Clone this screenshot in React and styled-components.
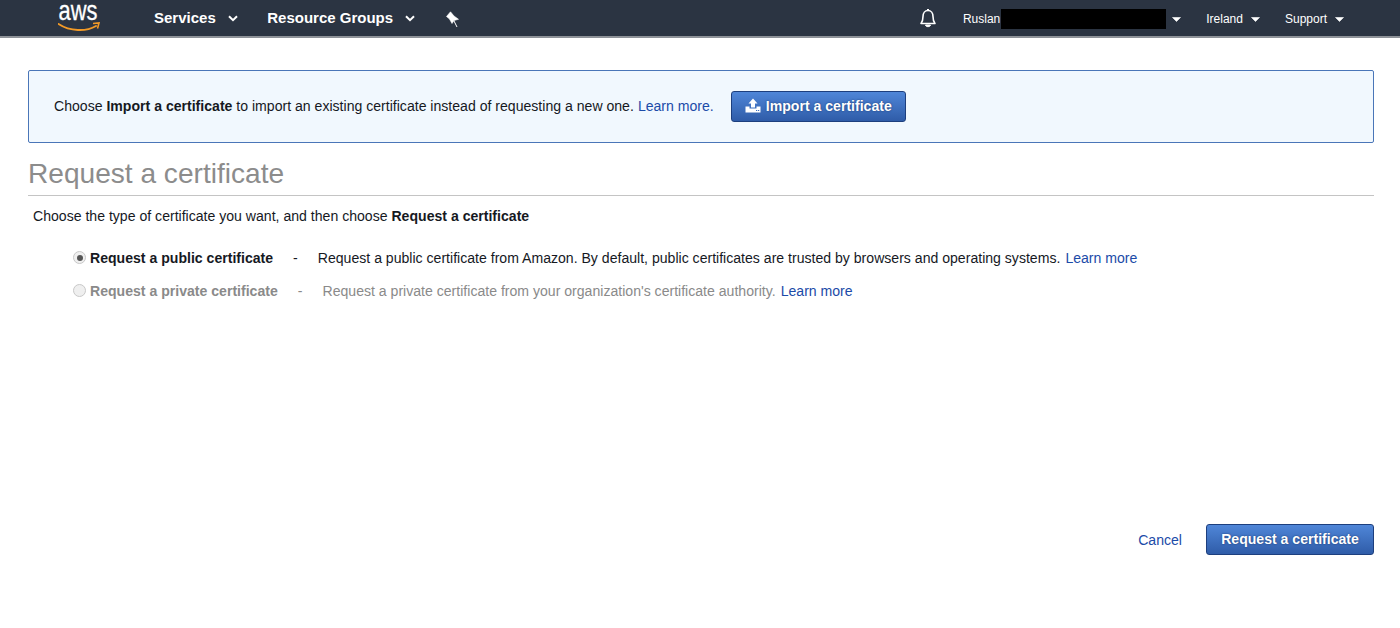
import React from 'react'
import styled, { createGlobalStyle } from 'styled-components'

const GlobalStyle = createGlobalStyle`
  html, body {
    margin: 0;
    padding: 0;
    background: #fff;
    font-family: "Liberation Sans", Arial, sans-serif;
    color: #16191f;
  }
`

const Page = styled.div`
  display: flex;
  flex-direction: column;
  height: 628px;
  overflow: hidden;
`

const NavBar = styled.header`
  display: flex;
  align-items: center;
  height: 36px;
  flex: none;
  padding: 0 56px 0 58px;
  background: #2b3442;
  border-bottom: 2px solid #8e9298;
  color: #fff;
`

const Logo = styled.div`
  position: relative;
  width: 40px;
  height: 32px;
  margin-right: 56px;
  flex: none;
`

const LogoText = styled.span`
  display: block;
  width: 50px;
  margin: 1px 0 0 -5px;
  font-size: 28px;
  line-height: 16px;
  text-align: center;
  transform: scaleX(0.78);
  -webkit-text-stroke: 0.3px #fff;
`

const Smile = styled.svg`
  position: absolute;
  left: 0;
  top: 19px;
`

const NavItem = styled.div`
  display: flex;
  align-items: center;
  font-size: ${p => (p.$small ? '12px' : '15px')};
  font-weight: ${p => (p.$small ? 400 : 700)};
  margin-left: ${p => p.$left || 0}px;
  margin-top: ${p => (p.$small ? '2px' : '0')};
  margin-bottom: ${p => (p.$small ? '0' : '2px')};
  white-space: nowrap;
`

const Chevron = styled.svg`
  margin-left: 12px;
  margin-top: 3px;
`

const SmallCaret = styled.svg`
  margin-left: ${p => p.$gap}px;
  margin-top: 1px;
`

const PinIcon = styled.svg`
  margin-left: 30px;
  margin-top: 3px;
  flex: none;
`

const Bell = styled.svg`
  margin-left: auto;
  flex: none;
`

const Redacted = styled.span`
  display: inline-block;
  width: 165px;
  height: 20px;
  background: #000;
  margin-left: 1px;
`

const Main = styled.main`
  display: flex;
  flex-direction: column;
  flex: 1;
  padding: 32px 26px 73px 28px;
`

const Banner = styled.section`
  display: flex;
  align-items: center;
  height: 69px;
  padding: 0 0 2px 25px;
  background: #f1f8fe;
  border: 1px solid #4a76b8;
  border-radius: 2px;
  font-size: 14.09px;
`

const Link = styled.a`
  color: #1c4ba8;
  text-decoration: none;
  margin-left: ${p => p.$left || 0}px;
`

const PrimaryButton = styled.button`
  display: flex;
  align-items: center;
  justify-content: center;
  height: 31px;
  width: ${p => p.$width}px;
  padding: 0 0 2px;
  border: 1px solid #1d3f7e;
  border-radius: 3px;
  background: linear-gradient(#4f86d8, #2f5ca8);
  color: #fff;
  font-family: inherit;
  font-size: 14.09px;
  font-weight: 700;
  text-shadow: 0 0 2px #17386f;
  margin-left: ${p => p.$left || 0}px;
  margin-top: ${p => p.$top || 0}px;
`

const UploadIcon = styled.svg`
  margin-right: 5px;
`

const Title = styled.h1`
  margin: 15px 0 0;
  height: 37px;
  font-size: 28.1px;
  line-height: 32px;
  font-weight: 400;
  color: #8c8c8c;
  border-bottom: 1px solid #c4c4c4;
`

const Intro = styled.p`
  margin: 12px 0 0 5px;
  font-size: 14.09px;
  line-height: 17px;
`

const Options = styled.div`
  display: flex;
  flex-direction: column;
  gap: 16px;
  margin: 24px 0 0 45px;
`

const OptionRow = styled.div`
  display: flex;
  align-items: center;
  height: 17px;
  font-size: 14.09px;
  color: ${p => (p.$disabled ? '#8a8a8a' : '#16191f')};
`

const Radio = styled.span`
  display: flex;
  align-items: center;
  justify-content: center;
  width: 11px;
  height: 11px;
  margin-right: 4px;
  border-radius: 50%;
  border: 1px solid #c8c8c8;
  background: ${p => (p.$disabled ? '#efefef' : '#f0f0f0')};
  &::after {
    content: '';
    display: ${p => (p.$checked ? 'block' : 'none')};
    width: 6px;
    height: 6px;
    border-radius: 50%;
    background: #555;
  }
`

const Dash = styled.span`
  margin: 0 20px;
`

const Footer = styled.footer`
  display: flex;
  align-items: center;
  justify-content: flex-end;
  margin-top: auto;
  font-size: 14.09px;
`

const NavChevron = () => (
  <Chevron width="10" height="7" viewBox="0 0 10 7">
    <path d="M1 1.2L5 5.2L9 1.2" fill="none" stroke="#fff" strokeWidth="2" />
  </Chevron>
)

const NavCaret = ({ gap }) => (
  <SmallCaret $gap={gap} width="9" height="5" viewBox="0 0 9 5">
    <path d="M0.5 0.5H8.5L4.5 4.5Z" fill="#fff" stroke="#fff" strokeWidth="0.6" strokeLinejoin="round" />
  </SmallCaret>
)

const App = () => (
  <Page>
    <GlobalStyle />
    <NavBar>
      <Logo>
        <LogoText>aws</LogoText>
        <Smile width="42" height="12" viewBox="0 0 42 12">
          <path d="M0.5 3C12 10.5 28 11 38 5" fill="none" stroke="#f29a27" strokeWidth="2" strokeLinecap="round" />
          <path d="M35 2.5L41 2L39.5 7.5" fill="none" stroke="#f29a27" strokeWidth="1.6" />
        </Smile>
      </Logo>
      <NavItem>
        Services
        <NavChevron />
      </NavItem>
      <NavItem $left={29.5}>
        Resource Groups
        <NavChevron />
      </NavItem>
      <PinIcon width="14" height="17" viewBox="0 0 14 17">
        <path d="M5.5 0.8L1.5 5.5L4.5 8L7 12.5L9 9.5L13.5 8.3L9 5Z" fill="#fff" stroke="#fff" strokeWidth="0.6" strokeLinejoin="round" />
        <path d="M9 10L12 16" fill="none" stroke="#fff" strokeWidth="1" />
      </PinIcon>
      <Bell width="18" height="20" viewBox="0 0 18 20">
        <path d="M5 15.5H13M2 15.5C3.8 13.5 4 12 4 8.5C4 5 6 2.5 9 2.5C12 2.5 14 5 14 8.5C14 12 14.2 13.5 16 15.5Z" fill="none" stroke="#fff" strokeWidth="1.6" strokeLinejoin="round" />
        <path d="M6.5 17H11.5C11.5 19.2 6.5 19.2 6.5 17ZM8 1.5H10" fill="#fff" stroke="#fff" />
      </Bell>
      <NavItem $small $left={26}>
        Ruslan
        <Redacted />
        <NavCaret gap={6} />
      </NavItem>
      <NavItem $small $left={25}>
        Ireland
        <NavCaret gap={8} />
      </NavItem>
      <NavItem $small $left={25}>
        Support
        <NavCaret gap={8} />
      </NavItem>
    </NavBar>
    <Main>
      <Banner>
        <span>
          Choose <b>Import a certificate</b> to import an existing certificate instead of requesting a new one.
          <Link $left={4}>Learn more.</Link>
        </span>
        <PrimaryButton $width={175} $left={17} $top={2}>
          <UploadIcon width="16" height="15" viewBox="0 0 16 15">
            <path d="M8 0.5L12.5 5.5H10V9.5H6V5.5H3.5Z" fill="#fff" />
            <path d="M0.5 8.5H4.5V10.5H11.5V8.5H15.5V14.5H0.5Z" fill="#fff" />
            <path d="M11 12H12.2V13H11ZM13 12H14.2V13H13Z" fill="#3d6fbe" />
          </UploadIcon>
          Import a certificate
        </PrimaryButton>
      </Banner>
      <Title>Request a certificate</Title>
      <Intro>
        Choose the type of certificate you want, and then choose <b>Request a certificate</b>
      </Intro>
      <Options>
        <OptionRow>
          <Radio $checked />
          <b>Request a public certificate</b>
          <Dash>-</Dash>
          Request a public certificate from Amazon. By default, public certificates are trusted by browsers and operating systems.
          <Link $left={5}>Learn more</Link>
        </OptionRow>
        <OptionRow $disabled>
          <Radio $disabled />
          <b>Request a private certificate</b>
          <Dash>-</Dash>
          Request a private certificate from your organization's certificate authority.
          <Link $left={5}>Learn more</Link>
        </OptionRow>
      </Options>
      <Footer>
        <Link>Cancel</Link>
        <PrimaryButton $width={168} $left={24}>Request a certificate</PrimaryButton>
      </Footer>
    </Main>
  </Page>
)

export default App
